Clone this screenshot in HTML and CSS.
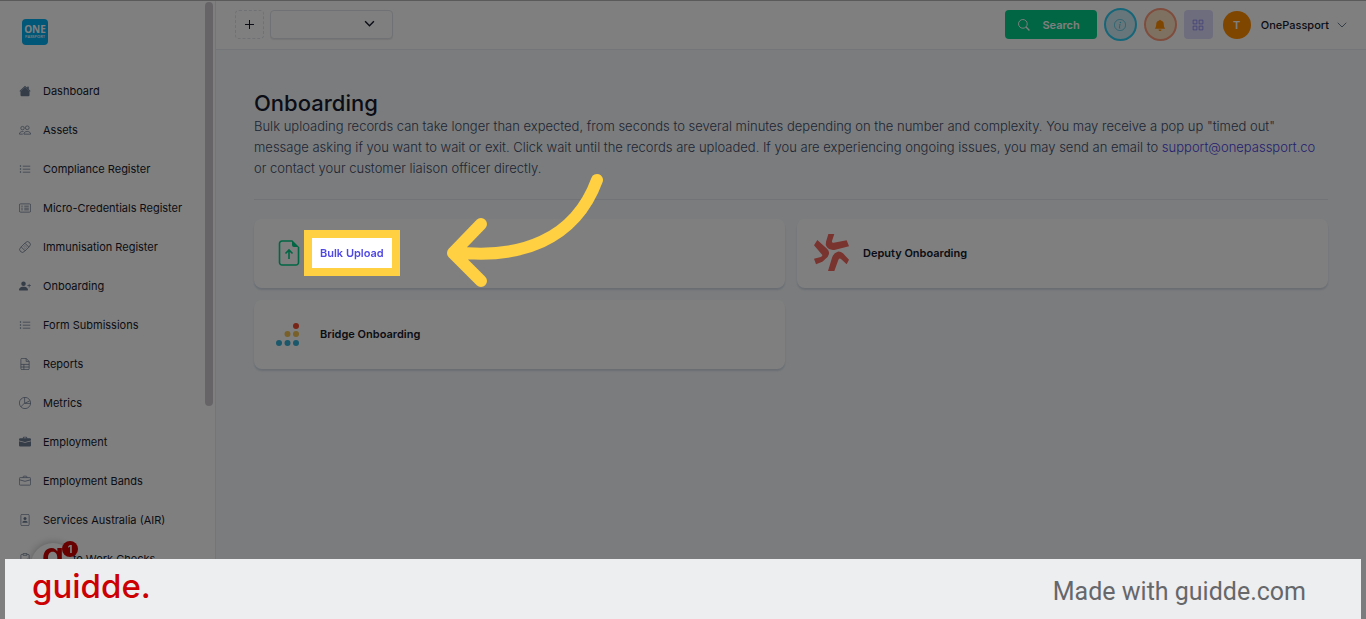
FILE: index.html
```html
<!DOCTYPE html>
<html lang="en">
<head>
  <meta charset="UTF-8">
  <meta name="viewport" content="width=device-width, initial-scale=1.0">
  <title>Onboarding - OnePassport</title>
  <link rel="stylesheet" href="styles.css">
</head>
<body>
  <!-- icon set -->
  <svg class="sprite" aria-hidden="true">
    <symbol id="house" viewBox="0 0 16 16"><path d="M8.7 1.5a1 1 0 0 0-1.4 0L.6 8.1l.8.8L8 2.2l6.600 6.700.8-.8L13 5.800V2.500a.5.5 0 0 0-.5-.5h-1a.5.5 0 0 0-.5.5v1.300zM8 2.800l6 6v4.700a1.500 1.500 0 0 1-1.500 1.500h-9A1.500 1.500 0 0 1 2 13.500V8.800z"/></symbol>
    <symbol id="people" viewBox="0 0 16 16"><g fill="none" stroke="currentColor"><circle cx="11" cy="5" r="2.500"/><path d="M6.500 13.500c0-2 1.500-3.500 4.500-3.500s4.500 1.500 4.500 3.500z"/><circle cx="4.700" cy="5.500" r="2.300"/><path d="M5 13.500H.5c0-2 1.500-3.500 4.500-3.500h1"/></g></symbol>
    <symbol id="list" viewBox="0 0 16 16"><path d="M5 3.500h10v1H5zM5 7.500h10v1H5zM5 11.500h10v1H5z"/><circle cx="2" cy="4" r="1"/><circle cx="2" cy="8" r="1"/><circle cx="2" cy="12" r="1"/></symbol>
    <symbol id="card-list" viewBox="0 0 16 16"><rect x=".5" y="2.500" width="15" height="11" rx="1.500" fill="none" stroke="currentColor"/><path d="M7 5h6v1H7zM7 7.500h6v1H7zM7 10h6v1H7zM3 5h2v1H3zM3 7.500h2v1H3zM3 10h2v1H3z"/></symbol>
    <symbol id="bandaid" viewBox="0 0 16 16"><g transform="rotate(-45 8 8)" fill="none" stroke="currentColor"><rect x="-.5" y="4.300" width="17" height="7.400" rx="3.700"/><path d="M4.500 4.300v7.400M11.500 4.300v7.400"/><path d="M6.500 6.500h1M8.500 6.500h1M6.500 9.500h1M8.500 9.500h1M7.500 8h1"/></g></symbol>
    <symbol id="person-plus" viewBox="0 0 16 16"><circle cx="6" cy="5" r="3"/><path d="M1 14s-1 0-1-1 1-4 6-4 6 3 6 4-1 1-1 1zM13.500 5a.5.5 0 0 1 .5.5V7h1.500a.5.5 0 0 1 0 1H14v1.500a.5.5 0 0 1-1 0V8h-1.500a.5.5 0 0 1 0-1H13V5.500a.5.5 0 0 1 .5-.5"/></symbol>
    <symbol id="sheet" viewBox="0 0 16 16"><path d="M9.500.5H4A1.500 1.500 0 0 0 2.500 2v12A1.500 1.500 0 0 0 4 15.500h8a1.500 1.500 0 0 0 1.500-1.500V4.500zV4.500h4M2.500 8.500h11M2.500 12h11M6.500 8.500v7" fill="none" stroke="currentColor"/></symbol>
    <symbol id="pie" viewBox="0 0 16 16"><g fill="none" stroke="currentColor"><circle cx="8" cy="8" r="7.500"/><path d="M7.500.5v7.500l-5 5M7.500 8.500l7-3.500M7.500 8.500h8"/></g></symbol>
    <symbol id="case-fill" viewBox="0 0 16 16"><path d="M6.500 1A1.500 1.500 0 0 0 5 2.500V3H1.500A1.500 1.500 0 0 0 0 4.500v1.400l7.600 2a1.500 1.500 0 0 0 .8 0l7.600-2V4.500A1.500 1.500 0 0 0 14.500 3H11v-.5A1.500 1.500 0 0 0 9.500 1zm0 1h3a.5.5 0 0 1 .5.5V3H6v-.5a.5.5 0 0 1 .5-.5M0 12.500A1.500 1.500 0 0 0 1.500 14h13a1.500 1.500 0 0 0 1.500-1.500V6.900L8.100 9h-.2L0 6.900z"/></symbol>
    <symbol id="case" viewBox="0 0 16 16"><path d="M1.500 3.500h13a1 1 0 0 1 1 1v8a1 1 0 0 1-1 1h-13a1 1 0 0 1-1-1v-8a1 1 0 0 1 1-1zM5.500 3.500v-1a1 1 0 0 1 1-1h3a1 1 0 0 1 1 1v1M.5 6.400L8 8.400l7.500-2" fill="none" stroke="currentColor"/></symbol>
    <symbol id="person-file" viewBox="0 0 16 16"><rect x="2.500" y=".5" width="11" height="15" rx="1.500" fill="none" stroke="currentColor"/><circle cx="8" cy="6" r="2"/><path d="M4.500 11.500c0-1.500 1.200-2.500 3.500-2.500s3.500 1 3.500 2.500z"/></symbol>
    <symbol id="clipboard" viewBox="0 0 16 16"><path d="M5 2H3.500A1 1 0 0 0 2.500 3v11.500a1 1 0 0 0 1 1h9a1 1 0 0 0 1-1V3a1 1 0 0 0-1-1H11M5.500.5h5v2.500h-5zM5.500 9l2 2 3.500-3.500" fill="none" stroke="currentColor"/></symbol>
    <symbol id="search" viewBox="0 0 16 16"><circle cx="6.500" cy="6.500" r="5.800" fill="none" stroke="currentColor" stroke-width="1.300"/><path d="M10.800 10.800l4.400 4.400" stroke="currentColor" stroke-width="1.800"/></symbol>
    <symbol id="info" viewBox="0 0 16 16"><circle cx="8" cy="8" r="7.500" fill="none" stroke="currentColor"/><circle cx="8.600" cy="4.500" r="1"/><path d="M6.400 6.900l2.300-.4-1 4.700c-.1.500 0 .8.400.8.300 0 .6-.1.900-.4l-.1.500c-.9 1-2.600.8-2.300-.8l.9-3.900-1.100-.2z"/></symbol>
    <symbol id="bell" viewBox="0 0 16 16"><path d="M8 16a2 2 0 0 0 2-2H6a2 2 0 0 0 2 2m1-14.100a1 1 0 1 0-2 0A5 5 0 0 0 3 6.800c0 1.700-.5 4.800-2 6.200h14c-1.500-1.400-2-4.500-2-6.200a5 5 0 0 0-4-4.900"/></symbol>
    <symbol id="grid" viewBox="0 0 16 16"><path d="M1.500 1.500h5v5h-5zM9.500 1.500h5v5h-5zM1.500 9.500h5v5h-5zM9.500 9.500h5v5h-5z" fill="none" stroke="currentColor"/></symbol>
    <symbol id="chevron" viewBox="0 0 10 10"><path d="M1 3l4 4 4-4" fill="none" stroke="currentColor" stroke-linecap="round"/></symbol>
  </svg>

  <div class="app">
    <aside class="sidebar">
      <a class="brand" href="#"><span class="brand-one">ONE</span><span class="brand-sub">PASSPORT</span></a>
      <nav class="menu">
        <a href="#"><svg><use href="#house"/></svg>Dashboard</a>
        <a href="#"><svg><use href="#people"/></svg>Assets</a>
        <a href="#"><svg><use href="#list"/></svg>Compliance Register</a>
        <a href="#"><svg><use href="#card-list"/></svg>Micro-Credentials Register</a>
        <a href="#"><svg><use href="#bandaid"/></svg>Immunisation Register</a>
        <a href="#"><svg><use href="#person-plus"/></svg>Onboarding</a>
        <a href="#"><svg><use href="#list"/></svg>Form Submissions</a>
        <a href="#"><svg><use href="#sheet"/></svg>Reports</a>
        <a href="#"><svg><use href="#pie"/></svg>Metrics</a>
        <a href="#"><svg><use href="#case-fill"/></svg>Employment</a>
        <a href="#"><svg><use href="#case"/></svg>Employment Bands</a>
        <a href="#"><svg><use href="#person-file"/></svg>Services Australia (AIR)</a>
        <a href="#"><svg><use href="#clipboard"/></svg>Right to Work Checks</a>
      </nav>
      <div class="scroll-thumb"></div>
    </aside>

    <div class="page">
      <header class="topbar">
        <button class="add" type="button" aria-label="Add"><svg viewBox="0 0 9 9"><path d="M4.500 0v9M0 4.500h9" fill="none" stroke="currentColor"/></svg></button>
        <div class="picker">
          <select aria-label="Organisation"><option></option></select>
          <svg viewBox="0 0 10 10"><path d="M1 3l4 4 4-4" fill="none" stroke="currentColor" stroke-width="1.300"/></svg>
        </div>
        <div class="tools">
          <button class="search" type="button"><svg><use href="#search"/></svg>Search</button>
          <button class="round info" type="button" aria-label="Info"><svg><use href="#info"/></svg></button>
          <button class="round alert" type="button" aria-label="Notifications"><svg><use href="#bell"/></svg></button>
          <button class="apps" type="button" aria-label="Apps"><svg><use href="#grid"/></svg></button>
          <button class="account" type="button"><span class="avatar">T</span>OnePassport<svg><use href="#chevron"/></svg></button>
        </div>
      </header>

      <main class="content">
        <h1>Onboarding</h1>
        <p>Bulk uploading records can take longer than expected, from seconds to several minutes depending on the number and complexity. You may receive a pop up "timed out" message asking if you want to wait or exit. Click wait until the records are uploaded. If you are experiencing ongoing issues, you may send an email to <a href="#">support@onepassport.co</a> or contact your customer liaison officer directly.</p>
        <hr>
        <div class="cards">
          <div class="card">
            <span class="card-icon">
              <svg width="24" height="28" viewBox="-2 0 24 28"><path d="M14 2H4a2.500 2.500 0 0 0-2.500 2.500v19A2.500 2.500 0 0 0 4 26h14a2.500 2.500 0 0 0 2.500-2.500V8" fill="none" stroke="#00cc88" stroke-width="1.600"/><path d="M14 1l7 7h-5a2 2 0 0 1-2-2z" fill="#00cc88"/><path d="M11 20v-9M7.500 14.500L11 11l3.500 3.500" fill="none" stroke="#00cc88" stroke-width="1.600"/></svg>
            </span>
            <a class="target" href="#">Bulk Upload</a>
            <svg class="arrow" width="170" height="130" viewBox="0 0 170 130"><path d="M14 82C80 90 135 70 157 10M41 54L13 83l28 28" fill="none" stroke="#ffd042" stroke-width="12" stroke-linecap="round" stroke-linejoin="round"/></svg>
          </div>
          <div class="card">
            <span class="card-icon">
              <svg width="35" height="37" viewBox="132 105 105 111"><g fill="#f2685f"><path d="M175 105h18l-7 21q-2 6 5 5l39-7 7 18-44 11q-15 2-22-8-6-8-3-17z"/><path d="M142 123l29 26q9 8 5 18-2 8-10 13-3 3-9 8l-19 8-6-17 20-5q8-3 3-8l-23-27z"/><path d="M174 216l12-40q5-15 17-18 9-1 16 5l18 19-7 14-17-16q-5-4-8 3l-12 33z"/></g></svg>
            </span>
            <a href="#">Deputy Onboarding</a>
          </div>
          <div class="card">
            <span class="card-icon">
              <svg width="24" height="24" viewBox="1 0 24 24"><circle cx="21" cy="4" r="3" fill="#f04a30"/><g fill="#f0c050"><circle cx="12.500" cy="12" r="3"/><circle cx="21" cy="12" r="3"/></g><g fill="#36b0d8"><circle cx="4" cy="21" r="3"/><circle cx="12.500" cy="21" r="3"/><circle cx="21" cy="21" r="3"/></g></svg>
            </span>
            <a href="#">Bridge Onboarding</a>
          </div>
        </div>
      </main>
    </div>
  </div>

  <button class="bubble" type="button">g<span class="count">1</span></button>

  <footer class="credit">
    <span class="logo">guidde.</span>
    <span class="made">Made with guidde.com</span>
  </footer>
</body>
</html>
```
FILE: styles.css
```css
*{
  box-sizing: border-box;
}
body{
  margin: 0;
  overflow: hidden;
  background: #f5f9fc;
  color: #16192c;
  font-family: Inter, "Liberation Sans", sans-serif;
  font-size: 11px;
}
a{
  color: inherit;
  text-decoration: none;
}
button{
  padding: 0;
  border: 0;
  color: inherit;
  font: inherit;
}
svg{
  display: block;
  flex: none;
  fill: currentColor;
}
.sprite{
  position: absolute;
  width: 0;
  height: 0;
}
.app{
  display: flex;
  height: 100vh;
  border-top: 1px solid #b4b4b4;
}

/* sidebar */
.sidebar{
  position: relative;
  flex: none;
  width: 216px;
  overflow: hidden;
  background: #fff;
  border-right: 1px solid #e7eaf0;
}
.brand{
  display: flex;
  flex-direction: column;
  align-items: center;
  justify-content: center;
  width: 26px;
  height: 26px;
  margin: 18px 0 26px 22px;
  border-radius: 4px;
  background: #00aeef;
  color: #fff;
}
.brand-one{
  font: 700 10px/9px "Open Sans", sans-serif;
}
.brand-sub{
  font: 600 4px/5px "Open Sans", sans-serif;
}
.menu a{
  display: flex;
  align-items: center;
  gap: 12px;
  height: 39px;
  padding-left: 19px;
  white-space: nowrap;
}
.menu svg{
  width: 12px;
  height: 12px;
  color: #6b7b93;
}
.scroll-thumb{
  position: absolute;
  top: 1px;
  right: 2px;
  width: 8px;
  height: 404px;
  border-radius: 4px;
  background: #cdc9cf;
}

/* top bar */
.page{
  flex: 1;
  min-width: 0;
}
.topbar{
  display: flex;
  align-items: center;
  gap: 6px;
  height: 49px;
  padding: 0 19px 1px;
  background: #fff;
  border-bottom: 1px solid #e7eaf0;
}
.add{
  display: grid;
  place-items: center;
  width: 29px;
  height: 29px;
  border: 1px dashed #e0e3e8;
  border-radius: 4px;
  background: none;
}
.add svg{
  width: 9px;
  height: 9px;
}
.picker{
  position: relative;
}
.picker select{
  display: block;
  width: 123px;
  height: 29px;
  border: 1px solid #e0e3e8;
  border-radius: 4px;
  background: #fff;
  box-shadow: 0 1px 1px rgba(0, 0, 0, .08);
  appearance: none;
}
.picker svg{
  position: absolute;
  top: 8px;
  right: 18px;
  width: 11px;
  height: 11px;
  pointer-events: none;
}
.tools{
  display: flex;
  align-items: center;
  gap: 7px;
  margin-left: auto;
}
.search{
  display: flex;
  align-items: center;
  gap: 12px;
  height: 29px;
  padding: 0 17px 0 13px;
  border-radius: 4px;
  background: #00cc88;
  color: #fff;
  font-weight: 600;
}
.search svg{
  width: 12px;
  height: 12px;
}
.round{
  display: grid;
  place-items: center;
  width: 33px;
  height: 33px;
  border: 2px solid;
  border-radius: 50%;
}
.round svg{
  width: 12px;
  height: 12px;
}
.info{
  border-color: #2ccdf2;
  background: #ccecf4;
  color: #4cc3e0;
}
.alert{
  border-color: #ff9a7a;
  background: #ffe3c4;
  color: #ff8c00;
}
.apps{
  display: grid;
  place-items: center;
  width: 29px;
  height: 29px;
  border-radius: 4px;
  background: #dcdafa;
  color: #8078f0;
}
.apps svg{
  width: 12px;
  height: 12px;
}
.account{
  display: flex;
  align-items: center;
  gap: 8px;
  padding-left: 3px;
  background: none;
  font-weight: 500;
}
.account svg{
  width: 10px;
  height: 10px;
  color: #6b7b93;
}
.avatar{
  width: 28px;
  height: 28px;
  margin-right: 2px;
  border-radius: 50%;
  background: #ff8c00;
  color: #fff;
  font-weight: 600;
  line-height: 28px;
}

/* content */
.content{
  padding: 41px 38px;
}
h1{
  margin: 0;
  font-size: 22px;
  font-weight: 500;
  line-height: 25px;
}
p{
  margin: 0 0 20px;
  color: #3f4a66;
  font-size: 13px;
  font-weight: 300;
  line-height: 21px;
}
p a{
  color: #4a3ee0;
}
hr{
  height: 1px;
  margin: 0 0 19px;
  border: 0;
  background: #e2e6ec;
}
.cards{
  display: grid;
  grid-template-columns: 1fr 1fr;
  gap: 12px;
}
.card{
  position: relative;
  display: flex;
  align-items: center;
  gap: 14px;
  height: 69px;
  padding: 0 16px 2px;
  border-radius: 8px;
  background: #fff;
  box-shadow: 0 2px 2px rgba(40, 60, 110, .16);
  font-weight: 600;
}
.card-icon{
  display: grid;
  place-items: center;
  width: 36px;
}

/* spotlight: the shadow dims everything around the link */
.target{
  position: relative;
  z-index: 10;
  margin: 0 -8px;
  padding: 0 8px;
  outline: 8px solid #ffd042;
  background: #fff;
  box-shadow: 0 0 0 2000px rgba(0, 0, 0, .5);
  color: #5048e5;
  line-height: 30px;
}
.arrow{
  position: absolute;
  z-index: 11;
  top: -49px;
  left: 186px;
}

/* guidde widget */
.bubble{
  position: fixed;
  z-index: 5;
  left: 31px;
  bottom: 32px;
  width: 44px;
  height: 44px;
  padding-bottom: 20px;
  border-radius: 50%;
  background: #fff;
  box-shadow: 0 0 8px rgba(0, 0, 0, .3);
  color: #c00;
  font: 600 36px/24px Inter, sans-serif;
}
.count{
  position: absolute;
  top: -2px;
  right: -3px;
  width: 16px;
  height: 16px;
  border-radius: 50%;
  background: #d00000;
  color: #fff;
  font: 700 11px/16px Inter, sans-serif;
}
.credit{
  position: fixed;
  z-index: 20;
  right: 5px;
  bottom: 0;
  left: 5px;
  display: flex;
  align-items: center;
  justify-content: space-between;
  height: 60px;
  padding: 0 55px 0 27px;
  background: #edeef0;
}
.logo{
  padding-bottom: 6px;
  color: #c00;
  font: 500 33px/54px Inter, sans-serif;
}
.made{
  padding-top: 6px;
  color: #66676a;
  font: 25px/30px Roboto, sans-serif;
}
```
